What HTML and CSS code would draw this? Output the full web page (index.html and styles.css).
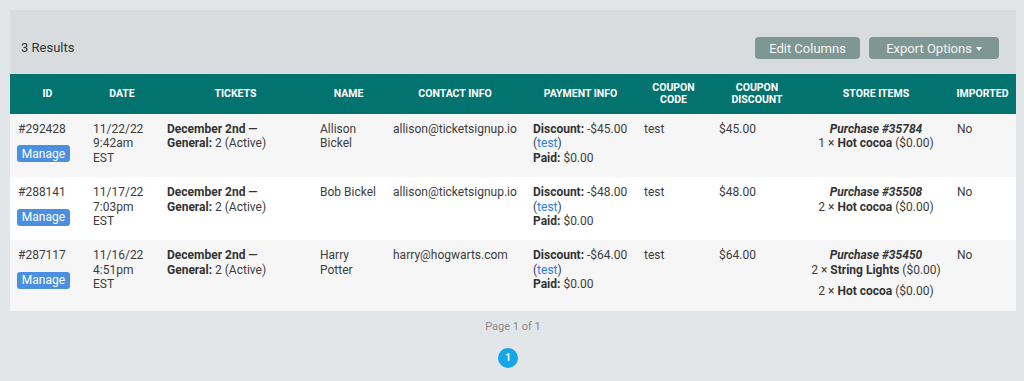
FILE: index.html
```html
<!DOCTYPE html>
<html>
<head>
<meta charset="utf-8">
<link rel="stylesheet" href="styles.css">
</head>
<body>
<div class="panel">
  <div class="toolbar">
    <div class="count">3 Results</div>
    <div class="actions">
      <button class="tbtn edit">Edit Columns</button>
      <button class="tbtn export">Export Options <span class="caret"></span></button>
    </div>
  </div>
  <table class="grid">
    <colgroup>
      <col style="width:75px"><col style="width:74px"><col style="width:153px"><col style="width:73px"><col style="width:140px"><col style="width:111px"><col style="width:75px"><col style="width:92px"><col style="width:146px"><col style="width:67px">
    </colgroup>
    <thead>
      <tr>
        <th>ID</th><th>DATE</th><th>TICKETS</th><th>NAME</th><th>CONTACT INFO</th><th>PAYMENT INFO</th><th>COUPON<br>CODE</th><th>COUPON<br>DISCOUNT</th><th>STORE ITEMS</th><th>IMPORTED</th>
      </tr>
    </thead>
    <tbody>
      <tr class="alt">
        <td>#292428<br><button class="manage">Manage</button></td>
        <td>11/22/22<br>9:42am<br>EST</td>
        <td><b>December 2nd —<br>General:</b> 2 (Active)</td>
        <td>Allison<br>Bickel</td>
        <td>allison@ticketsignup.io</td>
        <td><b>Discount:</b> -$45.00<br>(<a class="lnk">test</a>)<br><b>Paid:</b> $0.00</td>
        <td>test</td>
        <td>$45.00</td>
        <td class="store"><div><b><i>Purchase #35784</i></b></div><div>1 × <b>Hot cocoa</b> ($0.00)</div></td>
        <td>No</td>
      </tr>
      <tr>
        <td>#288141<br><button class="manage">Manage</button></td>
        <td>11/17/22<br>7:03pm<br>EST</td>
        <td><b>December 2nd —<br>General:</b> 2 (Active)</td>
        <td>Bob Bickel</td>
        <td>allison@ticketsignup.io</td>
        <td><b>Discount:</b> -$48.00<br>(<a class="lnk">test</a>)<br><b>Paid:</b> $0.00</td>
        <td>test</td>
        <td>$48.00</td>
        <td class="store"><div><b><i>Purchase #35508</i></b></div><div>2 × <b>Hot cocoa</b> ($0.00)</div></td>
        <td>No</td>
      </tr>
      <tr class="alt">
        <td>#287117<br><button class="manage">Manage</button></td>
        <td>11/16/22<br>4:51pm<br>EST</td>
        <td><b>December 2nd —<br>General:</b> 2 (Active)</td>
        <td>Harry<br>Potter</td>
        <td>harry@hogwarts.com</td>
        <td><b>Discount:</b> -$64.00<br>(<a class="lnk">test</a>)<br><b>Paid:</b> $0.00</td>
        <td>test</td>
        <td>$64.00</td>
        <td class="store"><div><b><i>Purchase #35450</i></b></div><div>2 × <b>String Lights</b> ($0.00)</div><div class="gap">2 × <b>Hot cocoa</b> ($0.00)</div></td>
        <td>No</td>
      </tr>
    </tbody>
  </table>
</div>
<div class="pager">
  <div class="pinfo">Page 1 of 1</div>
  <div class="pages"><span class="pnum">1</span></div>
</div>
</body>
</html>
```

FILE: styles.css
```css
html, body {
  margin: 0;
  padding: 0;
  background: #e2e6e9;
  font-family: Roboto, "Liberation Sans", Arial, sans-serif;
  color: #3a3a3a;
}
body {
  padding: 10px 8px 0 10px;
}
.panel {
  width: 1006px;
  background: #d8dcdf;
}
.toolbar {
  height: 64px;
  display: flex;
  align-items: center;
  justify-content: space-between;
  padding: 0 17px 0 11px;
  box-sizing: border-box;
}
.count {
  font-size: 13px;
  color: #333;
  margin-top: 10px;
}
.actions {
  display: flex;
  gap: 9px;
  margin-top: 12px;
}
.tbtn {
  height: 22px;
  border: 0;
  border-radius: 4px;
  background: #7e9694;
  color: #f2f5f5;
  font-family: Roboto, "Liberation Sans", Arial, sans-serif;
  font-size: 13px;
  padding: 0;
  white-space: nowrap;
  display: flex;
  align-items: center;
  justify-content: center;
}
.edit { width: 105px; }
.export { width: 130px; }
.caret {
  display: inline-block;
  width: 0;
  height: 0;
  border-left: 3.5px solid transparent;
  border-right: 3.5px solid transparent;
  border-top: 4px solid #f2f5f5;
  margin-left: 4px;
  margin-top: 1px;
}
.grid {
  width: 1006px;
  table-layout: fixed;
  border-collapse: collapse;
  font-size: 12px;
  line-height: 14.4px;
}
.grid thead tr {
  background: #037370;
  height: 40px;
}
.grid th {
  color: #fff;
  font-size: 10.5px;
  font-weight: 700;
  line-height: 12px;
  text-align: center;
  padding: 0 4px;
  vertical-align: middle;
}
.grid tbody tr { background: #fff; }
.grid tbody tr.alt { background: #f6f6f6; }
.grid td {
  vertical-align: top;
  padding: 8px 8px 12px 8px;
  white-space: nowrap;
  color: #3c3c3c;
}
.grid td b { color: #333; }
.manage {
  margin-top: 9px;
  height: 17px;
  width: 53px;
  border: 0;
  border-radius: 3px;
  background: #4a8fe0;
  color: #fff;
  font-family: Roboto, "Liberation Sans", Arial, sans-serif;
  font-size: 12px;
  padding: 0;
  display: block;
  margin-left: -1px;
}
.lnk { color: #2b7de0; }
.store { text-align: center; }
.store .gap { margin-top: 7px; }
.pager {
  width: 1006px;
  text-align: center;
}
.pinfo {
  font-size: 11px;
  color: #8a8a8a;
  margin-top: 9px;
  line-height: 13px;
}
.pages {
  margin-top: 15px;
  display: flex;
  justify-content: center;
}
.pnum {
  width: 20px;
  height: 20px;
  border-radius: 50%;
  background: #15a6ea;
  color: #fff;
  font-size: 10px;
  font-weight: 700;
  display: flex;
  align-items: center;
  justify-content: center;
  margin-right: 10px;
}
```
